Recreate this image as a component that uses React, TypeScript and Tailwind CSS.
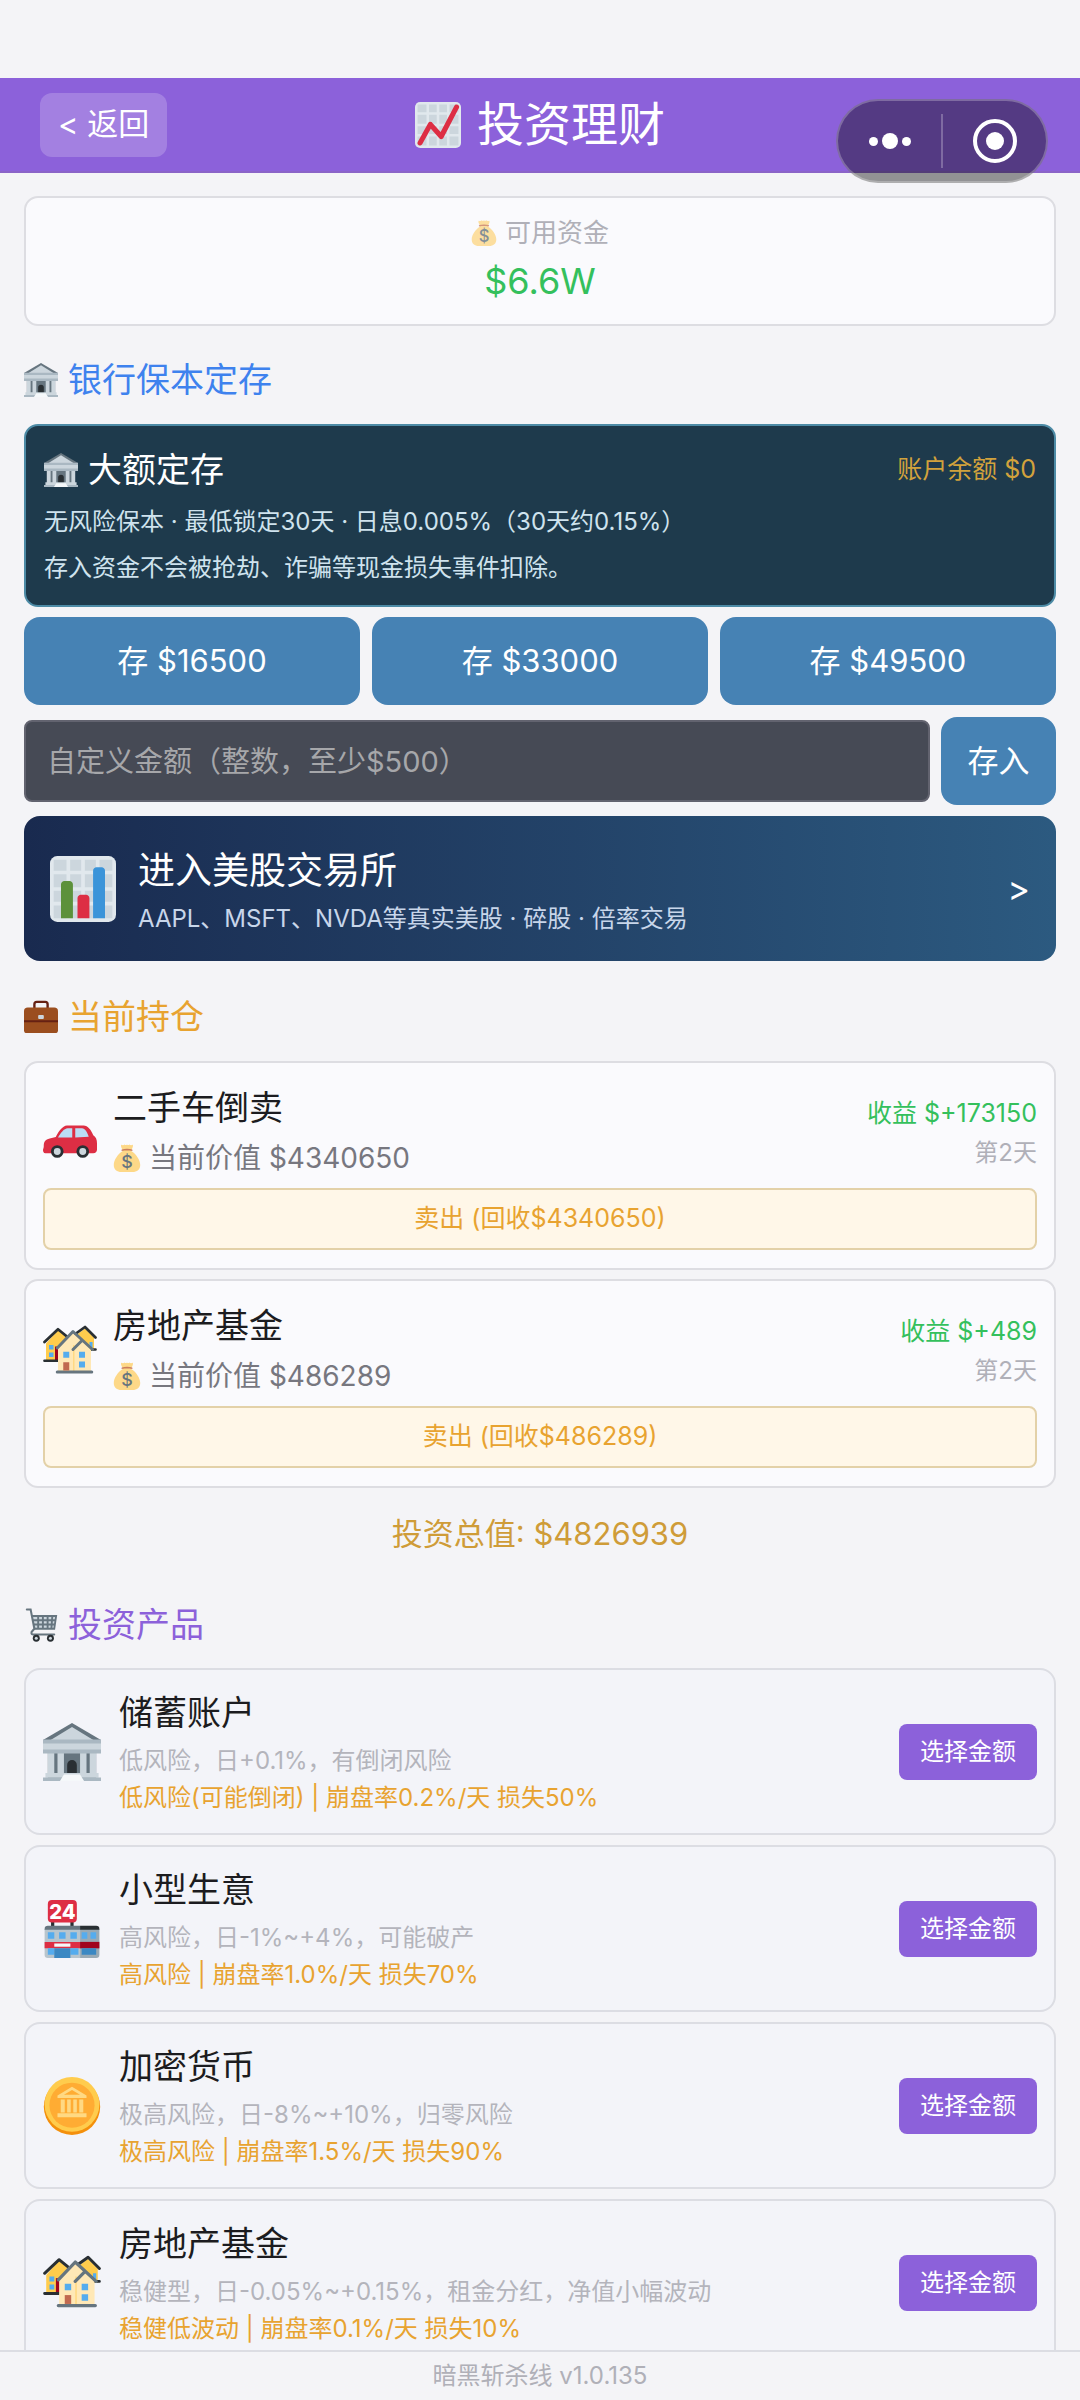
import type { ReactNode } from "react";

type IconName = "bank" | "car" | "houses" | "store" | "coin";

interface IconProps {
  className?: string;
}

function BankIcon({ className }: IconProps) {
  return (
    <svg viewBox="0 0 36 36" className={className} aria-hidden="true">
      <path fill="#66757F" d="M3 18h30v16H3z" />
      <path fill="#CCD6DD" d="M3 18h4v14H3zM9 18h4v14H9zM23 18h4v14h-4zM29 18h4v14h-4z" />
      <path fill="#292F33" d="M15 32v-6a3 3 0 0 1 6 0v6z" />
      <path fill="#66757F" d="M18 0 36 10.500H0z" />
      <path fill="#CCD6DD" d="M18 2.500 32 11H4z" />
      <path fill="#CCD6DD" d="M0 12h36v5H0zM1.500 31h33v3h-33z" />
      <path fill="#AAB8C2" d="M0 10.200h36v2.600H0zM0 16.500h36V19H0zM0 33.800h36V36H0z" />
      <path fill="#F5F8FA" d="M13 32h10l2.500 4h-15z" />
    </svg>
  );
}

function ChartUpIcon({ className }: IconProps) {
  return (
    <svg viewBox="0 0 36 36" className={className} aria-hidden="true">
      <rect width="36" height="36" rx="4" fill="#E1E8ED" />
      <path
        fill="#CCD6DD"
        d="M2 2h7v6H2zM11 2h6v6h-6zM19 2h6v6h-6zM27 2h7v6h-7zM2 10h7v7H2zM11 10h6v7h-6zM19 10h6v7h-6zM27 10h7v7h-7zM2 19h7v6H2zM11 19h6v6h-6zM19 19h6v6h-6zM27 19h7v6h-7zM2 27h7v7H2zM11 27h6v7h-6zM19 27h6v7h-6zM27 27h7v7h-7z"
      />
      <path
        fill="none"
        stroke="#DD2E44"
        strokeWidth="4"
        strokeLinecap="round"
        strokeLinejoin="round"
        d="M4 32 12 17.500l8.500 9.500L32.500 4"
      />
    </svg>
  );
}

function BarChartIcon({ className }: IconProps) {
  return (
    <svg viewBox="0 0 36 36" className={className} aria-hidden="true">
      <rect width="36" height="36" rx="4" fill="#E1E8ED" />
      <path
        fill="#CCD6DD"
        d="M2 2h7v6H2zM11 2h6v6h-6zM19 2h6v6h-6zM27 2h7v6h-7zM2 10h7v7H2zM11 10h6v7h-6zM19 10h6v7h-6zM27 10h7v7h-7zM2 19h7v6H2zM11 19h6v6h-6zM19 19h6v6h-6zM27 19h7v6h-7zM2 27h7v7H2zM11 27h6v7h-6zM19 27h6v7h-6zM27 27h7v7h-7z"
      />
      <path fill="#5C913B" d="M6 34V15.500a1.800 1.800 0 0 1 2-1.800h2.500a1.800 1.800 0 0 1 2 1.800V34z" />
      <path fill="#DD2E44" d="M15 34V23a1.800 1.800 0 0 1 2-1.800h2.500a1.800 1.800 0 0 1 2 1.800v11z" />
      <path fill="#3B94D9" d="M23.500 34V8a1.800 1.800 0 0 1 2-1.800H28A1.800 1.800 0 0 1 30 8v26z" />
    </svg>
  );
}

function MoneyBagIcon({ className }: IconProps) {
  return (
    <svg viewBox="0 0 36 36" className={className} aria-hidden="true">
      <path
        fill="#FDD888"
        d="M11 1c1.500 1 3 .5 4-.5 1 1 2 1 3 0 1 1 2 1 3 0 1 1 2.500 1.500 4 .5 1 0 1 2.500-.5 5L23.500 9C30 13 35 21 35 27c0 6-4 9-10 9H11c-6 0-10-3-10-9 0-6 5-14 11.500-18l-1-3C10 3.500 10 1 11 1z"
      />
      <path fill="#BF6952" opacity=".8" d="M11.500 7C15 6 21 6 24.500 7c.8.500.8 1.500 0 1.900-3.500-.8-9.500-.8-13 0-.8-.4-.8-1.400 0-1.900z" />
      <text
        x="18"
        y="31"
        textAnchor="middle"
        fontSize="23"
        fontWeight="500"
        fill="#67757F"
        fontFamily="Inter, sans-serif"
      >
        $
      </text>
    </svg>
  );
}

function BriefcaseIcon({ className }: IconProps) {
  return (
    <svg viewBox="0 0 36 36" className={className} aria-hidden="true">
      <path fill="none" stroke="#662113" strokeWidth="2.500" d="M11 9V4.500A2.500 2.500 0 0 1 13.500 2h9A2.500 2.500 0 0 1 25 4.500V9" />
      <path fill="#9B4E1F" d="M0 12a4 4 0 0 1 4-4h28a4 4 0 0 1 4 4v20a3 3 0 0 1-3 3H3a3 3 0 0 1-3-3z" />
      <path fill="#662113" d="M0 21.500h36v2H0z" />
      <rect x="15" y="16" width="6" height="4" rx="1" fill="#CCD6DD" />
    </svg>
  );
}

function CartIcon({ className }: IconProps) {
  return (
    <svg viewBox="0 0 36 36" className={className} aria-hidden="true">
      <path fill="#CCD6DD" d="M9 8h24l-2 14H11z" />
      <path
        fill="none"
        stroke="#66757F"
        strokeWidth="2"
        d="M8.500 8.500H34L32 22H11M9.500 13H33M10.500 17.500H32M15 8v14M20 8v14M25 8v14M30 8l-1 14"
      />
      <path fill="none" stroke="#66757F" strokeWidth="2.200" strokeLinecap="round" d="M3 1.500h4L11 22l-3 3.500c-.5 2 .5 2.500 2 2.500h22" />
      <circle cx="13" cy="32" r="3.700" fill="#292F33" />
      <circle cx="13" cy="32" r="1.600" fill="#CCD6DD" />
      <circle cx="28" cy="32" r="3.700" fill="#292F33" />
      <circle cx="28" cy="32" r="1.600" fill="#CCD6DD" />
    </svg>
  );
}

function CarIcon({ className }: IconProps) {
  return (
    <svg viewBox="0 0 36 36" className={className} aria-hidden="true">
      <path
        fill="#DD2E44"
        d="M16 13h11c3 0 5 3 6.500 6.500 1.800 1 2.500 3 2.500 5.500v4c0 1.500-1 2.500-2.500 2.500h-32C.5 31.500 0 30.500 0 29.500c0-1 .5-1.500.5-2.500 0-3.500 1-4.500 4-5.300l4-1C10 17.500 13 13 16 13z"
      />
      <path fill="#BBDDF5" d="M19.500 14.800h-3c-2.500 0-5 3.500-6.500 6.200h9.500zM21.500 14.800H26c2 0 3.500 2.500 4.500 5.700l-9 .5z" />
      <circle cx="9.500" cy="30.300" r="4.200" fill="#292F33" />
      <circle cx="9.500" cy="30.300" r="2.300" fill="#CCD6DD" />
      <circle cx="26.500" cy="30.300" r="4.200" fill="#292F33" />
      <circle cx="26.500" cy="30.300" r="2.300" fill="#CCD6DD" />
    </svg>
  );
}

function HousesIcon({ className }: IconProps) {
  return (
    <svg viewBox="0 0 36 36" className={className} aria-hidden="true">
      <path fill="#FFCC4D" d="M2 13 10 4l9 8v13H2zM20 9l8-6 6 6v9H20z" />
      <path fill="#A0041E" d="M8 15h3v9H8z" />
      <path fill="#55ACEE" d="M4 14h3v3H4zM4 19h3v3H4zM31 12h2v4h-2z" />
      <path fill="none" stroke="#292F33" strokeWidth="1.800" strokeLinecap="round" strokeLinejoin="round" d="m1 12 9-8.500 8 6.500M21 7l7-5 7 7M1 24.500h9M32 17h3" />
      <path fill="#FFE8B6" d="M10 16 20 6l12 11v15H10z" />
      <path fill="none" stroke="#FFD983" strokeWidth="1" d="M20.500 14v18" />
      <path fill="none" stroke="#66757F" strokeWidth="2" strokeLinecap="round" strokeLinejoin="round" d="M9.500 16 20 5l13 12M20 17l6-6M9.500 32h23" />
      <path fill="#C1694F" d="M13.500 25.500h4V31h-4z" />
      <path fill="#55ACEE" d="M13.500 18.500h4v4h-4zM24 18.500h4v4h-4zM24 25h4v4h-4z" />
    </svg>
  );
}

function StoreIcon({ className }: IconProps) {
  return (
    <svg viewBox="0 0 36 36" className={className} aria-hidden="true">
      <path fill="#292F33" d="M5 13h2v5H5zM17 13h2v5h-2z" />
      <rect x="3" y="0" width="18" height="14" rx="2.500" fill="#DD2E44" />
      <text x="12" y="11.500" textAnchor="middle" fontSize="12.500" fontWeight="800" fill="#fff" fontFamily="Inter, sans-serif">
        24
      </text>
      <path fill="#B8C5CD" d="M1 18h22v18H3a2 2 0 0 1-2-2z" />
      <path fill="#99AAB5" d="M23 18h12v16a2 2 0 0 1-2 2H23z" />
      <path fill="#66757F" d="M1 18a2 2 0 0 1 2-2h20v2.500H1z" />
      <path fill="#292F33" d="M23 16h10a2 2 0 0 1 2 2v.5H23z" />
      <path fill="#55ACEE" d="M3 20h4v4H3zM10 20h4v4h-4zM17 20h4v4h-4zM24 20h3.500v4H24zM29.500 20H33v4h-3.500z" />
      <path fill="#DD2E44" d="M1 26h22v4H1z" />
      <path fill="#A0041E" d="M23 26h12v4H23z" />
      <path fill="#F5F8FA" d="M7 27h10v2H7z" />
      <path fill="#55ACEE" d="M3 30h4v4H3zM17 30h5v4h-5z" />
      <path fill="#3B88C3" d="M7 30h10v6H7zM24 30h9v4h-9z" />
    </svg>
  );
}

function CoinIcon({ className }: IconProps) {
  return (
    <svg viewBox="0 0 36 36" className={className} aria-hidden="true">
      <circle cx="18" cy="18.500" r="17.500" fill="#F4900C" />
      <circle cx="18" cy="17" r="17" fill="#FFCC4D" />
      <circle cx="18" cy="17.500" r="14" fill="#FFAC33" />
      <path fill="#FFD983" d="m18 6 9 5.500V13H9v-1.500zM11 14h2.500v8H11zM15 14h2.200v8H15zM18.800 14H21v8h-2.200zM22.500 14H25v8h-2.500zM9 22.500h18V25H9z" />
      <path fill="#FFAC33" d="m18 8 5 3H13z" />
    </svg>
  );
}

const productIcons: Record<IconName, (props: IconProps) => ReactNode> = {
  bank: BankIcon,
  car: CarIcon,
  houses: HousesIcon,
  store: StoreIcon,
  coin: CoinIcon,
};

const depositAmounts = [16500, 33000, 49500];

interface Holding {
  icon: IconName;
  name: string;
  value: number;
  profit: number;
  day: number;
}

const holdings: Holding[] = [
  { icon: "car", name: "二手车倒卖", value: 4340650, profit: 173150, day: 2 },
  { icon: "houses", name: "房地产基金", value: 486289, profit: 489, day: 2 },
];

interface Product {
  icon: IconName;
  name: string;
  desc: string;
  risk: string;
}

const products: Product[] = [
  {
    icon: "bank",
    name: "储蓄账户",
    desc: "低风险，日+0.1%，有倒闭风险",
    risk: "低风险(可能倒闭) | 崩盘率0.2%/天 损失50%",
  },
  {
    icon: "store",
    name: "小型生意",
    desc: "高风险，日-1%~+4%，可能破产",
    risk: "高风险 | 崩盘率1.0%/天 损失70%",
  },
  {
    icon: "coin",
    name: "加密货币",
    desc: "极高风险，日-8%~+10%，归零风险",
    risk: "极高风险 | 崩盘率1.5%/天 损失90%",
  },
  {
    icon: "houses",
    name: "房地产基金",
    desc: "稳健型，日-0.05%~+0.15%，租金分红，净值小幅波动",
    risk: "稳健低波动 | 崩盘率0.1%/天 损失10%",
  },
];

interface SectionTitleProps {
  icon: ReactNode;
  color: string;
  children: ReactNode;
}

function SectionTitle({ icon, color, children }: SectionTitleProps) {
  return (
    <h2 className={`flex items-center gap-2.5 text-[34px] leading-[48px] ${color}`}>
      {icon}
      {children}
    </h2>
  );
}

function HoldingCard({ icon, name, value, profit, day }: Holding) {
  const Icon = productIcons[icon];
  return (
    <li className="flex flex-col gap-[5px] rounded-[14px] border-2 border-[#dddde2] bg-[#fafafd] px-[17px] pt-5 pb-[18px]">
      <div className="flex items-center gap-4">
        <Icon className="size-[54px] shrink-0" />
        <div className="flex-1">
          <h3 className="text-[34px] leading-[50px] text-[#1c1c20]">{name}</h3>
          <p className="flex items-center gap-2 text-[28px] leading-[50px] text-[#77777f]">
            <MoneyBagIcon className="size-7" />
            当前价值 ${value}
          </p>
        </div>
        <div className="text-right">
          <p className="text-[25px] leading-[40px] text-[#34c05c]">收益 $+{profit}</p>
          <p className="text-2xl leading-[40px] text-[#b0b0b8]">第{day}天</p>
        </div>
      </div>
      <button
        type="button"
        className="h-[62px] rounded-lg border-2 border-[#e3d1a8] bg-[#fff7e8] text-[25px] text-[#e8a330]"
      >
        卖出 (回收${value})
      </button>
    </li>
  );
}

function ProductCard({ icon, name, desc, risk }: Product) {
  const Icon = productIcons[icon];
  return (
    <li className="flex items-center gap-[18px] rounded-2xl border-2 border-[#dcdde3] bg-[#f3f4f9] px-[17px] pt-[18px] pb-[17px]">
      <Icon className="size-[58px] shrink-0" />
      <div className="flex-1">
        <h3 className="text-[34px] leading-[50px] text-[#1c1c20]">{name}</h3>
        <p className="mt-1 text-2xl leading-[37px] text-[#b4b4bc]">{desc}</p>
        <p className="text-2xl leading-[37px] text-[#e8a330]">{risk}</p>
      </div>
      <button type="button" className="h-14 rounded-lg bg-[#8c61da] px-[21px] text-2xl text-white">
        选择金额
      </button>
    </li>
  );
}

export default function App() {
  return (
    <div className="relative flex h-screen flex-col bg-[#f4f4f7] pt-[78px] font-['Inter','Noto_Sans_CJK_SC',sans-serif]">
      <header className="grid h-[95px] shrink-0 grid-cols-[1fr_auto_1fr] items-center border-b-2 border-[#8b64c8] bg-[#8c61da] px-10 text-white">
        <button
          type="button"
          className="h-16 justify-self-start rounded-xl bg-white/20 px-[18px] text-[31px]"
        >
          &lt; 返回
        </button>
        <h1 className="flex items-center gap-4 text-[47px]">
          <ChartUpIcon className="size-[46px]" />
          投资理财
        </h1>
      </header>

      {/* host app capsule, floats over the header */}
      <div className="absolute top-[99px] right-8 flex h-[84px] w-[212px] items-center rounded-full border-2 border-white/25 bg-black/40">
        <button type="button" aria-label="更多" className="flex flex-1 items-center justify-center gap-1">
          <span className="size-[9px] rounded-full bg-white" />
          <span className="size-4 rounded-full bg-white" />
          <span className="size-[9px] rounded-full bg-white" />
        </button>
        <span className="h-[54px] w-0.5 bg-white/25" />
        <button type="button" aria-label="关闭" className="flex flex-1 items-center justify-center">
          <span className="flex size-11 items-center justify-center rounded-full border-4 border-white">
            <span className="size-[18px] rounded-full bg-white" />
          </span>
        </button>
      </div>

      <main className="min-h-0 flex-1 overflow-y-auto px-6 pt-[23px] [scrollbar-width:none]">
        <section className="flex h-[130px] flex-col items-center justify-center rounded-[14px] border-2 border-[#dddde2] bg-[#fafafd]">
          <p className="flex items-center gap-2 text-[26px] leading-[40px] text-[#b0b0b8]">
            <MoneyBagIcon className="size-[26px] opacity-80" />
            可用资金
          </p>
          <p className="text-[36px] leading-[56px] text-[#34c05c]">$6.6W</p>
        </section>

        <section className="mt-[30px]">
          <SectionTitle icon={<BankIcon className="size-[34px]" />} color="text-[#3e82ee]">
            银行保本定存
          </SectionTitle>
          <div className="mt-5 rounded-[14px] border-2 border-[#4d8ba6] bg-[#1e3a4c] px-[18px] pt-5 pb-3.5">
            <div className="flex items-center justify-between">
              <h3 className="flex items-center gap-2.5 text-[34px] leading-[48px] text-white">
                <BankIcon className="size-[34px]" />
                大额定存
              </h3>
              <span className="text-[25px] text-[#d2a23c]">账户余额 $0</span>
            </div>
            <p className="mt-[5px] text-2xl leading-[46px] text-[#cfe3ee]">
              无风险保本 · 最低锁定30天 · 日息0.005%（30天约0.15%）
            </p>
            <p className="text-2xl leading-[46px] text-[#cfe3ee]">
              存入资金不会被抢劫、诈骗等现金损失事件扣除。
            </p>
          </div>
          <div className="mt-2.5 grid grid-cols-3 gap-3">
            {depositAmounts.map((amount) => (
              <button
                key={amount}
                type="button"
                className="h-[88px] rounded-2xl bg-[#4682b4] text-[31px] text-white"
              >
                存 ${amount}
              </button>
            ))}
          </div>
          <form className="mt-3 flex items-center gap-[11px]" onSubmit={(e) => e.preventDefault()}>
            <input
              type="text"
              inputMode="numeric"
              aria-label="自定义金额"
              placeholder="自定义金额（整数，至少$500）"
              className="h-[82px] min-w-0 flex-1 rounded-lg border-2 border-[#62636f] bg-[#464a55] px-[21px] text-[29px] text-white placeholder:text-[#a6a7aa]"
            />
            <button type="submit" className="h-[88px] w-[115px] rounded-2xl bg-[#4682b4] text-[31px] text-white">
              存入
            </button>
          </form>
          <button
            type="button"
            className="mt-[11px] flex h-[145px] w-full items-center gap-[22px] rounded-2xl bg-linear-to-r from-[#192a4f] to-[#2c5a80] px-[26px] text-left"
          >
            <BarChartIcon className="size-[66px] shrink-0" />
            <span className="flex flex-1 flex-col pt-1.5">
              <span className="text-[37px] leading-[54px] text-white">进入美股交易所</span>
              <span className="text-2xl leading-[42px] text-[#c8d6ea]">
                AAPL、MSFT、NVDA等真实美股 · 碎股 · 倍率交易
              </span>
            </span>
            <span className="text-[34px] text-white">&gt;</span>
          </button>
        </section>

        <section className="mt-8">
          <SectionTitle icon={<BriefcaseIcon className="size-[34px]" />} color="text-[#e8a330]">
            当前持仓
          </SectionTitle>
          <ul className="mt-5 flex flex-col gap-[9px]">
            {holdings.map((holding) => (
              <HoldingCard key={holding.name} {...holding} />
            ))}
          </ul>
          <p className="mt-[22px] text-center text-[31px] leading-[48px] text-[#cf9c38]">投资总值: $4826939</p>
        </section>

        <section className="mt-[43px]">
          <SectionTitle icon={<CartIcon className="size-[34px]" />} color="text-[#8c61da]">
            投资产品
          </SectionTitle>
          <ul className="mt-[19px] flex flex-col gap-2.5">
            {products.map((product) => (
              <ProductCard key={product.name} {...product} />
            ))}
          </ul>
        </section>
      </main>

      <footer className="h-[50px] shrink-0 border-t-2 border-[#dcdde3] text-center text-2xl leading-[48px] text-[#b0b0b8]">
        暗黑斩杀线 v1.0.135
      </footer>
    </div>
  );
}
